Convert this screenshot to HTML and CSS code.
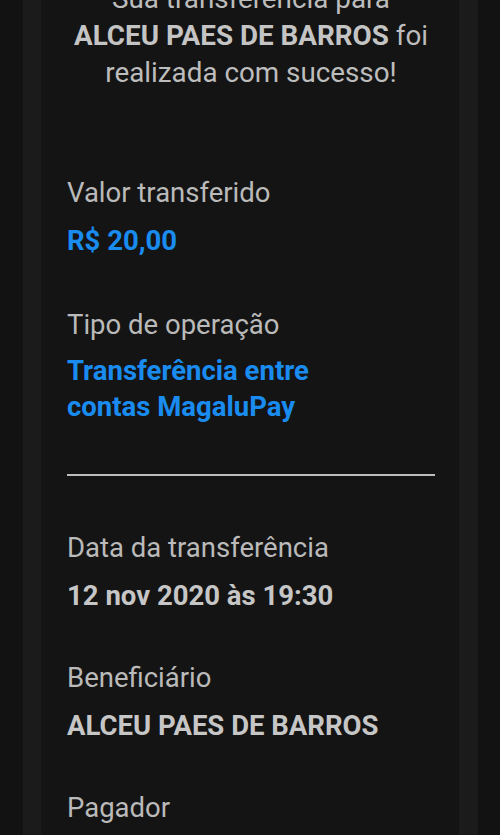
FILE: index.html
```html
<!DOCTYPE html>
<html lang="pt-BR">
<head>
<meta charset="utf-8">
<link rel="stylesheet" href="styles.css">
</head>
<body>
<div class="frame">
  <main class="card">
    <p class="intro">Sua transferência para<br><strong>ALCEU PAES DE BARROS</strong> foi<br>realizada com sucesso!</p>

    <section class="field first">
      <div class="label">Valor transferido</div>
      <div class="value blue">R$ 20,00</div>
    </section>

    <section class="field second">
      <div class="label">Tipo de operação</div>
      <div class="value blue tight">Transferência entre<br>contas MagaluPay</div>
    </section>

    <hr class="divider">

    <section class="field after-divider">
      <div class="label">Data da transferência</div>
      <div class="value">12 nov 2020 às 19:30</div>
    </section>

    <section class="field">
      <div class="label">Beneficiário</div>
      <div class="value">ALCEU PAES DE BARROS</div>
    </section>

    <section class="field">
      <div class="label">Pagador</div>
      <div class="value">&nbsp;</div>
    </section>
  </main>
</div>
</body>
</html>
```

FILE: styles.css
```css
html, body {
  margin: 0;
  padding: 0;
}
body {
  background: #121212;
  font-family: Roboto, "Noto Sans", sans-serif;
  color: #bcbcbc;
  height: 835px;
  overflow: hidden;
}
.frame {
  margin: 0 22px 0 23px;
  padding: 0 19px 0 18px;
  background: #1b1b1b;
  height: 100%;
}
.card {
  background: #141414;
  height: 100%;
  padding: 0 24px 0 26px;
  overflow: hidden;
}
.intro {
  margin: -20px -10px 0;
  text-align: center;
  font-size: 27.8px;
  line-height: 37px;
  color: #bdbdbd;
}
.intro strong {
  font-weight: 700;
  color: #c4c4c4;
}
.field {
  margin-top: 46px;
}
.field.first {
  margin-top: 84px;
}
.field.second {
  margin-top: 48px;
}
.field.after-divider {
  margin-top: 54px;
}
.label {
  font-size: 27.5px;
  line-height: 36px;
  color: #bababa;
}
.value {
  margin-top: 12px;
  font-size: 27.5px;
  line-height: 36px;
  font-weight: 700;
  color: #c6c6c6;
}
.value.tight {
  margin-top: 10px;
}
.value.blue {
  color: #1a8cf0;
}
.divider {
  margin: 49px 0 0;
  border: 0;
  height: 2px;
  background: #bdbdbd;
}
```
